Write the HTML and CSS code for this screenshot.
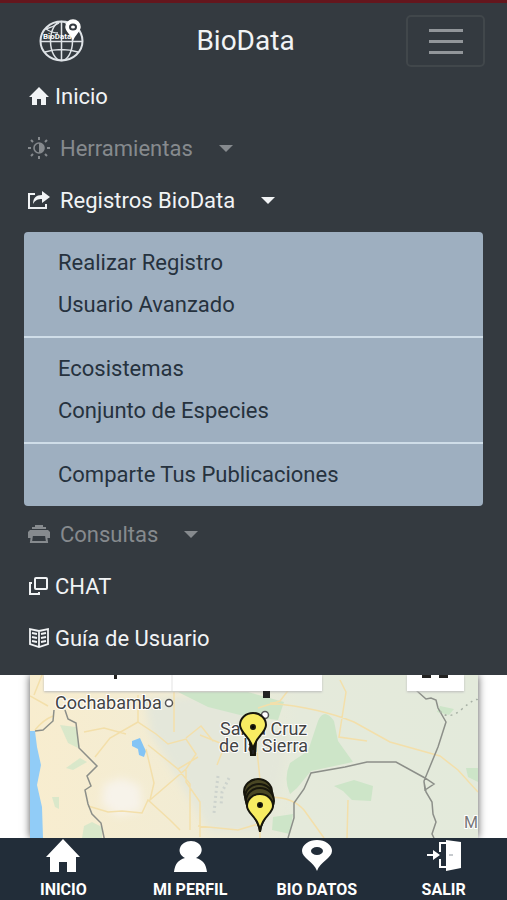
FILE: index.html
```html
<!DOCTYPE html>
<html lang="es">
<head>
    <meta charset="UTF-8">
    <meta name="viewport" content="width=device-width, initial-scale=1.0">
    <title>BioData</title>
    <link rel="stylesheet" href="styles.css">
</head>
<body>
    <header class="navbar">
        <div class="navbar-top">
            <a href="#" class="logo" aria-label="BioData">
                <svg width="46" height="44" viewBox="0 0 46 44" fill="none" stroke="#dfe3e7" stroke-width="1.500">
                    <ellipse cx="22.500" cy="22" rx="21" ry="19.500" stroke-width="2"/>
                    <ellipse cx="22.500" cy="22" rx="11" ry="19.500"/>
                    <path d="M22.500 2v40M1 22.500h43M6 33q16-5 33 0M7 10q6 4 12 4M7 10q7-2 13-6"/>
                    <text x="4" y="20" class="logo-text">BioData</text>
                    <path d="M34 20c-2-5-7-8-7-12a7 7 0 0 1 14 0c0 4-5 7-7 12z" fill="#fff" stroke="#fff"/>
                    <ellipse cx="34" cy="8" rx="3" ry="2.500" stroke="#343a40" stroke-width="2"/>
                </svg>
            </a>
            <a href="#" class="brand">BioData</a>
            <button type="button" class="toggler" aria-label="Menú">
                <span></span>
                <span></span>
                <span></span>
            </button>
        </div>
        <nav class="menu">
            <a href="#" class="menu-item">
                <svg width="22" height="22" viewBox="0 0 22 22" fill="currentColor"><path d="M11 2L1 12h3v8h5v-6h4v6h5v-8h3z"/></svg>
                Inicio
            </a>
            <a href="#" class="menu-item toggle muted">
                <svg width="24" height="22" viewBox="0 0 24 22" fill="none" stroke="currentColor" stroke-width="2">
                    <circle cx="12" cy="11" r="5" stroke-width="1.600"/>
                    <path d="M12 6a5 5 0 0 1 0 10z" fill="currentColor" stroke="none"/>
                    <path d="M12 0v3M12 19v3M1 11h3M20 11h3M4 3l2 2M18 17l2 2M4 19l2-2M18 5l2-2"/>
                </svg>
                Herramientas
                <span class="caret"></span>
            </a>
            <a href="#" class="menu-item toggle">
                <svg width="24" height="22" viewBox="0 0 24 22">
                    <path d="M8 5H2v14h17v-4" fill="none" stroke="currentColor" stroke-width="2"/>
                    <path d="M15 2l8 6-8 6v-4c-4 0-7 1-9 5 0-6 3-9 9-9z" fill="currentColor"/>
                </svg>
                Registros BioData
                <span class="caret"></span>
            </a>
            <div class="dropdown">
                <a href="#">Realizar Registro</a>
                <a href="#">Usuario Avanzado</a>
                <hr>
                <a href="#">Ecosistemas</a>
                <a href="#">Conjunto de Especies</a>
                <hr>
                <a href="#">Comparte Tus Publicaciones</a>
            </div>
            <a href="#" class="menu-item toggle muted">
                <svg width="24" height="22" viewBox="0 0 24 22">
                    <path d="M5 6V4h3V2h8v2h3v2zM3 7h18l2 2v6h-4v-4H5v4H1V9z" fill="currentColor"/>
                    <path d="M5 12h14l1 7H4z" fill="none" stroke="currentColor" stroke-width="2"/>
                </svg>
                Consultas
                <span class="caret"></span>
            </a>
            <a href="#" class="menu-item">
                <svg width="22" height="22" viewBox="0 0 22 22" fill="none" stroke="currentColor" stroke-width="2">
                    <rect x="7" y="3" width="12" height="11" rx="1"/>
                    <path d="M4 8H2v11h9v-2"/>
                </svg>
                CHAT
            </a>
            <a href="#" class="menu-item">
                <svg width="22" height="22" viewBox="0 0 22 22" fill="none" stroke="currentColor" stroke-width="1.800">
                    <path d="M11 4L2 2v15l9 3 9-3V2zM11 4v16M4 6l5 1M4 10l5 1M4 14l5 1M18 6l-5 1M18 10l-5 1M18 14l-5 1"/>
                </svg>
                Guía de Usuario
            </a>
        </nav>
    </header>

    <main class="map-area">
        <div class="map">
            <svg viewBox="30 675 448 163" preserveAspectRatio="xMidYMin slice">
                <defs>
                    <filter id="soft" x="-20%" y="-20%" width="140%" height="140%"><feGaussianBlur stdDeviation="4"/></filter>
                    <linearGradient id="land">
                        <stop offset="0" stop-color="#f8edcf"/>
                        <stop offset="0.35" stop-color="#f2ecd4"/>
                        <stop offset="0.6" stop-color="#e5eadb"/>
                        <stop offset="1" stop-color="#e3eadb"/>
                    </linearGradient>
                </defs>
                <rect x="30" y="675" width="448" height="163" fill="url(#land)"/>

                <!-- terrain -->
                <g filter="url(#soft)">
                    <path d="M145 700l70-8 75 40-20 100h-60l-60-100z" fill="#e4e7da"/>
                    <path d="M104 784l18-6 18 8 2 24-24 6-16-12z" fill="#f7f3ea"/>
                </g>
                <g fill="#cde5c8">
                    <path d="M178 692h70l36 10-6 18-34-4-36-9z"/>
                    <path d="M60 725l16 2 4 22-12-6z" opacity=".7"/>
                    <path d="M66 768l14-10 7 4-14 8zM52 797h7v12l-4-2zM84 826l8-4 10 5v11H82z" opacity=".7"/>
                    <path d="M290 763l18-12 10-30q6-14 16 0l4 20 15 21-42 9-14 17-7 6q-7-15 0-31z"/>
                    <path d="M334 786l20-6 19 6-2 15-19-1-9-9zM273 817l20-3-3 20-18-4zM466 768h12v14l-10-5z"/>
                    <path d="M440 706l14 3-5 6-12-3z"/>
                </g>
                <path d="M30 731h5l2 16 4 18-4 20 5 22 1 31H30z" fill="#91ccf7"/>
                <path d="M132 741l8-3 4 9 2 4-2 6-5-2-1-6-6-3z" fill="#83c4f5"/>

                <!-- roads -->
                <g fill="none" stroke="#f3dfaa" stroke-width="1.500">
                    <path d="M30 696l18 10M42 675l-8 20M35 730q8-10 18-14M95 757l15-19 28-16M84 732l20-4 22 6M138 695v27l18 12 12 10 18-5 10 15-10 15-36 31 4-17-8-34M88 806l20 6 14-1 20 2 6-13 22 20 10 10M148 745l30 24 20-12M186 770v12l14 20v35M186 738l15-12 12 15M178 769l12 15v46M200 735l25 10-8 20M254 720l6 60v58M260 798q30-4 44 12l20 28M270 703q50 5 84 19l36 20 50 14 18 14 20 22M340 680l6 12-7 45 28 4M348 800l-1 38M300 675l-20 26-22 7M198 826l40 4 20-6M174 692v40"/>
                </g>
                <path d="M218 776l-2 17-2 20M229 778l-7 14-1 14" stroke="#cdd3cd" stroke-width="3" stroke-dasharray="2 3" fill="none"/>

                <!-- borders -->
                <g fill="none" stroke="#8c8f89" stroke-width="1.500">
                    <path d="M35 731l8-1 10-9 1-11M65 710l3 9 8 4 3 25 18 18-10 10 4 10-6 4 3 14 4 10 9 9 5 24M288 838l6-20v-15l10-14 7-16 34-6 22-5h29l29 16 9 6-9 6-1-9 14-34 8-25-8-14-2-8-5-2-5 1-9-8v-5M424 782l2 10 6 10 1 12 3 8-4 12 2 4"/>
                    <path d="M440 711q8 10 22-2t16-9" stroke="#a7b0a5" stroke-dasharray="2 4"/>
                </g>

                <!-- map controls -->
                <path d="M44 675h278v16H44zM407 675h57v16h-57z" class="map-control"/>
                <path d="M172 675v16" stroke="#e3e3e3"/>
                <path d="M114 675h3v4h-3zM422 675h9v3h-9zM439 675h9v3h-9zM263 691h7v7h-7z" fill="#222"/>

                <!-- places -->
                <g class="places">
                    <text x="55" y="709">Cochabamba</text>
                    <text x="220" y="735">Santa Cruz</text>
                    <text x="219" y="752">de la Sierra</text>
                    <text x="464" y="828" class="faded">M</text>
                </g>
                <g fill="#fff" stroke="#555" stroke-width="1.500">
                    <circle cx="169" cy="703" r="3.500"/>
                    <circle cx="265" cy="715" r="3.500"/>
                </g>

                <!-- markers -->
                <g stroke="#17160c" stroke-width="2">
                    <g fill="#4a4724">
                        <path d="M258 822c-2-15-14-20-14-30a14 13 0 0 1 28 0c0 10-12 15-14 30z"/>
                        <path d="M259 827c-2-15-14-20-14-30a14 13 0 0 1 28 0c0 10-12 15-14 30z"/>
                        <path d="M260 831c-2-15-14-20-14-30a14 13 0 0 1 28 0c0 10-12 15-14 30z"/>
                    </g>
                    <path d="M250 742h6l-1 13h-4z" fill="#222"/>
                    <g fill="#f8ec62">
                        <path d="M253 750c-1-12-13-17-13-25a13 12 0 0 1 26 0c0 8-12 13-13 25z"/>
                        <path d="M260 832c-1-15-13-18-13-26a13 12 0 0 1 26 0c0 8-12 11-13 26z"/>
                    </g>
                    <circle cx="253" cy="727" r="2"/>
                    <circle cx="260" cy="805" r="2"/>
                </g>
            </svg>
        </div>
    </main>

    <footer class="tabs">
        <a href="#">
            <svg width="36" height="36" viewBox="0 0 36 36" fill="currentColor"><path d="M18 1L1 19h4v15h9V24h8v10h9V19h4z"/></svg>
            INICIO
        </a>
        <a href="#">
            <svg width="36" height="36" viewBox="0 0 36 36" fill="currentColor"><path d="M13 20C3 15 8 3 19 3s15 12 5 17c7 2 10 6 11 14H2c1-8 4-12 11-14z"/></svg>
            MI PERFIL
        </a>
        <a href="#">
            <svg width="36" height="36" viewBox="0 0 36 36" fill="currentColor" fill-rule="evenodd"><path d="M18 33C15 24 3 20 3 13a15 11 0 0 1 30 0c0 7-12 11-15 20zM12 13a6 4 0 0 0 12 0 6 4 0 0 0-12 0z"/></svg>
            BIO DATOS
        </a>
        <a href="#">
            <svg width="36" height="36" viewBox="0 0 36 36">
                <path d="M20 5h-6v9M14 21v8h6" fill="none" stroke="currentColor" stroke-width="2"/>
                <path d="M20 2l15 2v26l-15 3zM1 16h6v-4l7 5-7 5v-4H1z" fill="currentColor"/>
                <path d="M23 17h4" stroke="#8c949c"/>
            </svg>
            SALIR
        </a>
    </footer>
</body>
</html>
```

FILE: styles.css
```css
* {
    box-sizing: border-box;
}

body {
    font-family: Roboto, 'Liberation Sans', sans-serif;
    background: #fff;
    margin: 0;
    min-height: 100vh;
    display: flex;
    flex-direction: column;
}

a {
    color: inherit;
    text-decoration: none;
}

svg {
    flex: none;
}

.navbar {
    background: #343a40;
    color: #f1f3f5;
    border-top: 3px solid #64161d;
    padding-bottom: 11px;
}

.navbar-top {
    display: flex;
    align-items: center;
    justify-content: space-between;
    padding: 12px 22px 3px 39px;
}

.logo {
    display: flex;
}

.logo-text {
    font-size: 8px;
    font-weight: bold;
    fill: #fff;
    stroke: none;
}

.brand {
    font-size: 28px;
    line-height: 36px;
}

.toggler {
    display: flex;
    flex-direction: column;
    align-items: center;
    justify-content: center;
    gap: 8px;
    width: 79px;
    height: 52px;
    padding: 0;
    background: none;
    border: 2px solid #41474b;
    border-radius: 5px;
}

.toggler span {
    width: 34px;
    height: 3px;
    background: #92969a;
}

.menu-item {
    display: flex;
    align-items: center;
    gap: 5px;
    height: 52px;
    padding-left: 28px;
    font-size: 22px;
}

.menu-item.toggle {
    gap: 9px;
    padding-left: 27px;
}

.muted {
    color: #868a8e;
}

.caret {
    border: 7px solid transparent;
    border-top-color: currentColor;
    border-bottom: 0;
    margin-left: 17px;
}

.dropdown {
    display: flex;
    flex-direction: column;
    margin: 6px 24px 2px;
    padding: 10px 0;
    background: #9eafc0;
    color: #26323e;
    border-radius: 4px;
}

.dropdown a {
    padding: 0 34px;
    font-size: 22px;
    line-height: 42px;
}

.dropdown hr {
    width: 100%;
    height: 2px;
    margin: 10px 0;
    border: 0;
    background: #cfdde8;
}

.map-area {
    display: flex;
    flex: 1;
    min-height: 163px;
    padding: 0 29px 0 30px;
    overflow: hidden;
}

.map {
    display: flex;
    flex: 1;
    box-shadow: 0 0 8px #555;
}

.map svg {
    width: 100%;
    height: 100%;
}

.map-control {
    fill: #fff;
    filter: drop-shadow(0 1px 1px #bbb);
}

.places {
    font-size: 18px;
    fill: #444;
    stroke: #fff;
    stroke-width: 2px;
    paint-order: stroke;
}

.places .faded {
    font-size: 16px;
    fill: #777;
}

.tabs {
    display: grid;
    grid-template-columns: repeat(4, 1fr);
    height: 62px;
    background: #222d39;
    color: #fff;
    position: relative;
}

.tabs a {
    display: flex;
    flex-direction: column;
    align-items: center;
    gap: 6px;
    font-size: 16px;
    font-weight: bold;
    line-height: 20px;
}
```
